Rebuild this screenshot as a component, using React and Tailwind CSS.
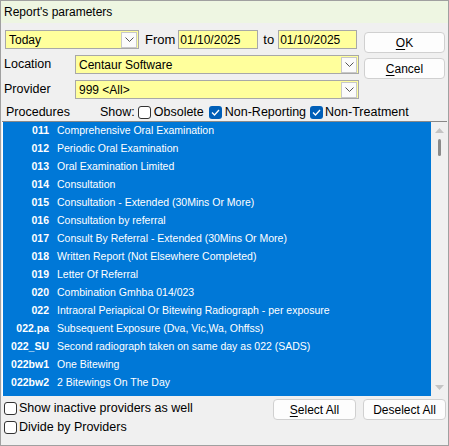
import React from "react";

const procedures = [
  ["011", "Comprehensive Oral Examination"],
  ["012", "Periodic Oral Examination"],
  ["013", "Oral Examination Limited"],
  ["014", "Consultation"],
  ["015", "Consultation - Extended (30Mins Or More)"],
  ["016", "Consultation by referral"],
  ["017", "Consult By Referral - Extended  (30Mins Or More)"],
  ["018", "Written Report (Not Elsewhere Completed)"],
  ["019", "Letter Of Referral"],
  ["020", "Combination Gmhba 014/023"],
  ["022", "Intraoral Periapical Or Bitewing Radiograph - per exposure"],
  ["022.pa", "Subsequent Exposure (Dva, Vic,Wa, Ohffss)"],
  ["022_SU", "Second radiograph taken on same day as 022 (SADS)"],
  ["022bw1", "One Bitewing"],
  ["022bw2", "2 Bitewings On The Day"],
];

const Chevron = () => (
  <svg width="9" height="5" viewBox="0 0 9 5" fill="none">
    <path d="M0.5 0.5 L4.5 4.5 L8.5 0.5" stroke="#555" strokeWidth="1" />
  </svg>
);

const Combo = ({ value, className }) => (
  <div className={`flex h-[19px] items-center border border-[#a8a8a8] bg-[#ffff9c] ${className}`}>
    <span className="flex-1 pl-[3px] text-[12px] leading-none text-black">{value}</span>
    <div className="mr-[1px] flex h-[16px] w-[16px] items-center justify-center border border-[#c8c8c8] bg-[#fbfbfb]">
      <Chevron />
    </div>
  </div>
);

const Check = ({ checked }) =>
  checked ? (
    <span className="flex h-[13px] w-[13px] shrink-0 items-center justify-center rounded-[3px] bg-[#005fb8]">
      <svg width="9" height="7" viewBox="0 0 9 7" fill="none">
        <path d="M1 3.5 L3.5 6 L8 1" stroke="white" strokeWidth="1.3" />
      </svg>
    </span>
  ) : (
    <span className="block h-[13px] w-[13px] shrink-0 rounded-[3px] border border-[#333] bg-white" />
  );

const Button = ({ children, className }) => (
  <button
    className={`flex items-center justify-center rounded-[4px] border border-[#d0d0d0] bg-[#fdfdfd] text-[12px] text-black ${className}`}
  >
    {children}
  </button>
);

export default function App() {
  return (
    <div
      className="relative h-[446px] w-[449px] overflow-hidden border border-[#a0a0a0] bg-[#f0f0f0] text-black"
      style={{ fontFamily: '"Liberation Sans", Arial, sans-serif' }}
    >
      {/* title */}
      <div className="flex h-[22px] items-center bg-[#eef6e2] pl-[3px] text-[12px]">
        Report's parameters
      </div>

      {/* top area */}
      <div className="flex pt-[7px]">
        <div className="flex w-[358px] flex-col gap-[6px]">
          <div className="flex h-[19px] items-center">
            <Combo value="Today" className="ml-[4px] w-[134px]" />
            <span className="ml-[6px] text-[13px]">From</span>
            <div className="ml-[3px] flex h-[19px] w-[80px] items-center border border-[#a8a8a8] bg-[#ffff9c] pl-[1px] text-[12px]">
              01/10/2025
            </div>
            <span className="ml-[5px] text-[13px]">to</span>
            <div className="ml-[4px] flex h-[19px] w-[79px] items-center border border-[#a8a8a8] bg-[#ffff9c] pl-[1px] text-[12px]">
              01/10/2025
            </div>
          </div>
          <div className="flex h-[19px] items-center">
            <span className="ml-[3px] w-[71px] text-[12.5px]">Location</span>
            <Combo value="Centaur Software" className="w-[284px]" />
          </div>
          <div className="flex h-[19px] items-center">
            <span className="ml-[3px] w-[71px] text-[12.5px]">Provider</span>
            <Combo value="999 <All>" className="w-[284px]" />
          </div>
        </div>
        <div className="ml-[5px] flex flex-col gap-[5px] pt-[2px]">
          <Button className="h-[21px] w-[81px]">
            <span className="underline decoration-1 underline-offset-2">O</span>K
          </Button>
          <Button className="h-[21px] w-[81px]">
            <span className="underline decoration-1 underline-offset-2">C</span>ancel
          </Button>
        </div>
      </div>

      {/* procedures header */}
      <div className="mt-[5px] flex h-[17px] items-center text-[12.5px]">
        <span className="ml-[5px] w-[94px]">Procedures</span>
        <span>Show:</span>
        <span className="ml-[3px]"><Check /></span>
        <span className="ml-[3px]">Obsolete</span>
        <span className="ml-[5px]"><Check checked /></span>
        <span className="ml-[3px]">Non-Reporting</span>
        <span className="ml-[4px]"><Check checked /></span>
        <span className="ml-[2px]">Non-Treatment</span>
      </div>

      {/* list */}
      <div className="mx-[1px] flex h-[275px] border-t border-[#888] bg-white">
        <div className="ml-[1px] flex-1 overflow-hidden bg-[#0078d7] text-[10.5px] text-white">
          {procedures.map(([code, desc]) => (
            <div key={code} className="flex h-[18px] items-center whitespace-nowrap">
              <span className="w-[46px] text-right font-bold">{code}</span>
              <span className="ml-[8px]">{desc}</span>
            </div>
          ))}
        </div>
        <div className="flex w-[16px] flex-col items-center bg-[#f0f0f0]">
          <svg className="mt-[6px]" width="9" height="5" viewBox="0 0 9 5">
            <path d="M0 5 L4.5 0 L9 5 Z" fill="#c4c4c4" />
          </svg>
          <div className="mt-[6px] h-[17px] w-[3px] rounded-full bg-[#8a8a8a]" />
          <div className="flex-1" />
          <svg className="mb-[6px]" width="9" height="5" viewBox="0 0 9 5">
            <path d="M0 0 L4.5 5 L9 0 Z" fill="#c4c4c4" />
          </svg>
        </div>
      </div>

      {/* bottom */}
      <div className="mt-[3px] flex">
        <div className="flex flex-1 flex-col gap-[6px] pl-[3px] pt-[3px] text-[12.5px]">
          <div className="flex h-[13px] items-center gap-[2px]">
            <Check />
            <span>Show inactive providers as well</span>
          </div>
          <div className="flex h-[13px] items-center gap-[2px]">
            <Check />
            <span>Divide by Providers</span>
          </div>
        </div>
        <div className="mr-[2px] flex gap-[7px]">
          <Button className="h-[21px] w-[83px]">
            <span className="underline decoration-1 underline-offset-2">S</span>elect All
          </Button>
          <Button className="h-[21px] w-[83px]">Deselect All</Button>
        </div>
      </div>
    </div>
  );
}
